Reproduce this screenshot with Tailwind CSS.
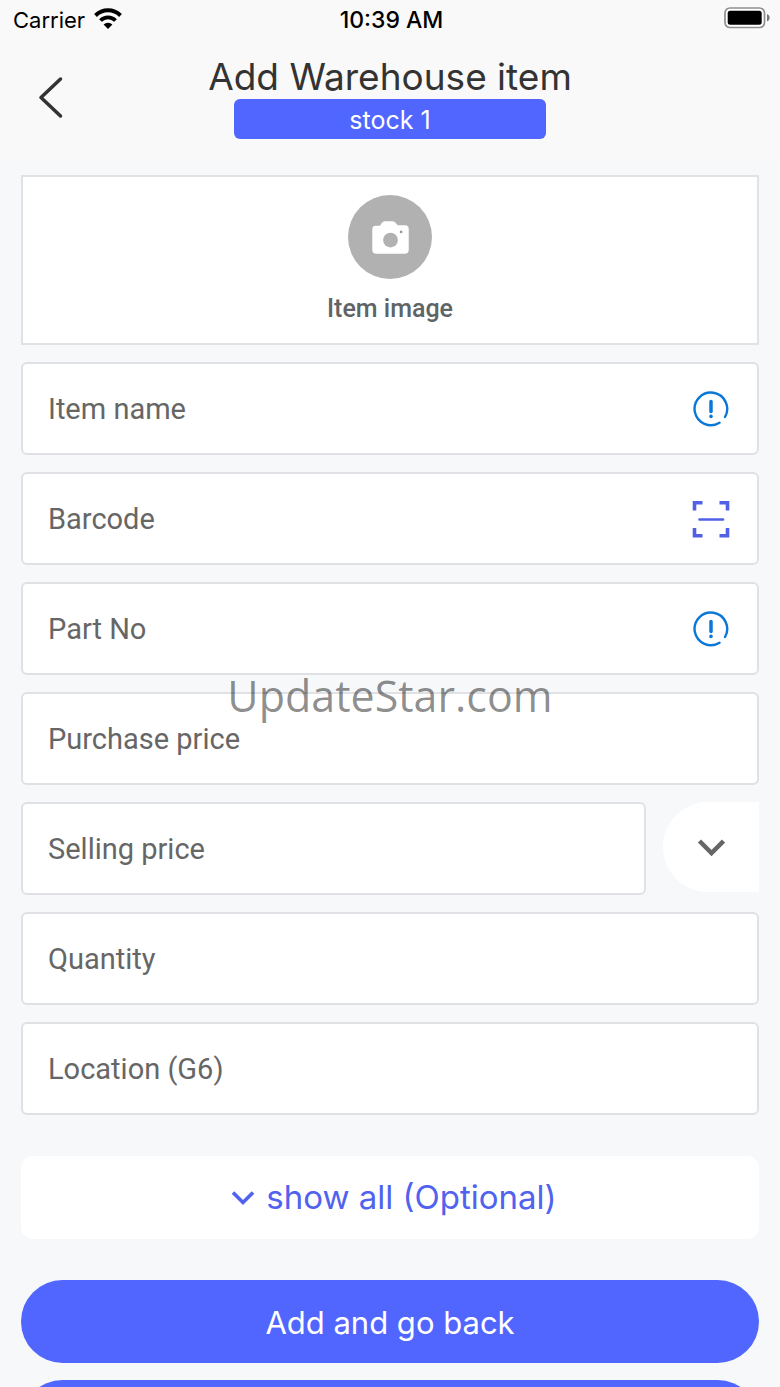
<!DOCTYPE html>
<html lang="en">
<head>
<meta charset="utf-8">
<meta name="viewport" content="width=device-width, initial-scale=1">
<title>Add Warehouse item</title>
<script src="https://cdn.jsdelivr.net/npm/@tailwindcss/browser@4"></script>
</head>
<body class="relative h-screen overflow-hidden bg-[#f6f8fa] font-['Inter',sans-serif] text-[#333333]">
  <header class="h-40 bg-[#f9f9f9]">
    <div class="grid h-10 grid-cols-3 items-center pr-[10px] pl-[13px] text-[22px] leading-10 text-black">
      <div class="flex items-center gap-2">
        <span>Carrier</span>
        <svg class="mb-1 h-[21px] w-[30px]" viewBox="0 0 28 21" aria-hidden="true">
          <path d="M1.500 7.500a17.800 17.800 0 0 1 25 0" fill="none" stroke="#000" stroke-width="4"/>
          <path d="M6.500 12.500a10.700 10.700 0 0 1 15 0" fill="none" stroke="#000" stroke-width="3.800"/>
          <path d="M14 21l-4.400-4.400a6.300 6.300 0 0 1 8.800 0z"/>
        </svg>
      </div>
      <span class="text-center text-[23px] font-medium">10:39 AM</span>
      <svg class="mb-1 h-[22px] w-[46px] justify-self-end" viewBox="0 0 46 22" aria-label="Battery full" role="img">
        <rect x="1" y="1" width="39.500" height="19.500" rx="5" fill="#fff" stroke="#8e8e8e" stroke-width="1.700"/>
        <rect x="3.700" y="3.700" width="34" height="14" rx="2.500"/>
        <path d="M43 7c3.500 1.500 3.500 6 0 7.500z" fill="#777"/>
      </svg>
    </div>
    <div class="grid grid-cols-[72px_1fr_72px] pt-[17px]">
      <button type="button" aria-label="Back" class="flex h-20 items-center justify-end pr-2">
        <svg class="h-11 w-7" viewBox="0 0 28 44" fill="none" stroke="#333" stroke-width="3.500" stroke-linecap="round" stroke-linejoin="round"><path d="M24.500 4L5 22.500L24.500 41"/></svg>
      </button>
      <div class="flex flex-col items-center">
        <h1 class="text-[37px] leading-10 font-normal">Add Warehouse item</h1>
        <div class="mt-0.5 h-10 w-[312px] rounded-md bg-[#5066ff] text-center text-[25px] leading-[42px] text-white">stock 1</div>
      </div>
    </div>
  </header>

  <main class="flex flex-col px-[21px] pt-[15px]">
    <button type="button" class="flex h-[170px] flex-col items-center border-2 border-[#e0e2e5] bg-white pt-[18px] font-['Roboto',sans-serif] text-[25px] font-medium text-[#5f6466]">
      <svg class="size-[84px]" viewBox="0 0 83 83" aria-hidden="true">
        <circle cx="41.500" cy="41.500" r="41.500" fill="#b1b1b1"/>
        <path d="M27 30.500h4.500l2-3q1-1.500 3-1.500h7.500q2 0 3 1.500l2 2.500h7.500q3.500 0 3.500 3.500v20.500q0 4-4 4h-28q-4 0-4-4v-19.500q0-4 3-4z" fill="#fff"/>
        <circle cx="42" cy="44.500" r="7.300" fill="#b1b1b1"/><circle cx="52.500" cy="36.500" r="1.300" fill="#999"/>
      </svg>
      <span class="mt-[14px] leading-8">Item image</span>
    </button>

    <form class="mt-[17px] flex flex-col gap-[17px] font-['Roboto',sans-serif] text-[29px]">
      <div class="flex h-[93px] items-center rounded-md border-2 border-[#dfe1e4] bg-white pr-7 pl-[25px]">
        <input type="text" aria-label="Item name" placeholder="Item name" class="h-full min-w-0 flex-1 bg-transparent outline-none placeholder:text-[#666666]">
        <svg class="size-9" viewBox="0 0 36 36" fill="none" stroke="#0b78d8" stroke-linecap="round" aria-hidden="true">
          <path d="M26.500 31.700A16.300 16.300 0 1 1 32 26" stroke-width="2.400"/><path d="M18 10.500v10" stroke-width="3.500"/><path d="M18 25.400v.1" stroke-width="3.600"/>
        </svg>
      </div>
      <div class="flex h-[93px] items-center rounded-md border-2 border-[#dfe1e4] bg-white pr-[27px] pl-[25px]">
        <input type="text" aria-label="Barcode" placeholder="Barcode" class="h-full min-w-0 flex-1 bg-transparent outline-none placeholder:text-[#666666]">
        <button type="button" aria-label="Scan barcode">
          <svg class="size-[38px]" viewBox="0 0 38 38" fill="none" stroke="#5260e8" aria-hidden="true">
            <path d="M2.500 10.500v-7.800h8M27.500 2.700h8v7.800M35.500 28v7.800h-8M10.500 35.800h-8v-7.800" stroke-width="3.600"/><path d="M7.500 19.500h23.500" stroke-width="2.600" stroke-linecap="round"/>
          </svg>
        </button>
      </div>
      <div class="flex h-[93px] items-center rounded-md border-2 border-[#dfe1e4] bg-white pr-7 pl-[25px]">
        <input type="text" aria-label="Part No" placeholder="Part No" class="h-full min-w-0 flex-1 bg-transparent outline-none placeholder:text-[#666666]">
        <svg class="size-9" viewBox="0 0 36 36" fill="none" stroke="#0b78d8" stroke-linecap="round" aria-hidden="true">
          <path d="M26.500 31.700A16.300 16.300 0 1 1 32 26" stroke-width="2.400"/><path d="M18 10.500v10" stroke-width="3.500"/><path d="M18 25.400v.1" stroke-width="3.600"/>
        </svg>
      </div>
      <input type="text" aria-label="Purchase price" placeholder="Purchase price" class="h-[93px] rounded-md border-2 border-[#dfe1e4] bg-white px-[25px] outline-none placeholder:text-[#666666]">
      <div class="flex gap-[17px]">
        <input type="text" aria-label="Selling price" placeholder="Selling price" class="h-[93px] min-w-0 flex-1 rounded-md border-2 border-[#dfe1e4] bg-white px-[25px] outline-none placeholder:text-[#666666]">
        <button type="button" aria-label="More prices" class="flex h-[90px] w-24 items-center justify-center rounded-l-full bg-white">
          <svg class="h-5 w-7" viewBox="0 0 28 20" fill="none" stroke="#666" stroke-width="4.500"><path d="M2.500 4l12 12L26.500 4"/></svg>
        </button>
      </div>
      <input type="text" aria-label="Quantity" placeholder="Quantity" class="h-[93px] rounded-md border-2 border-[#dfe1e4] bg-white px-[25px] outline-none placeholder:text-[#666666]">
      <input type="text" aria-label="Location (G6)" placeholder="Location (G6)" class="h-[93px] rounded-md border-2 border-[#dfe1e4] bg-white px-[25px] outline-none placeholder:text-[#666666]">
    </form>

    <button type="button" class="mt-[41px] flex h-[83px] items-center justify-center gap-[11px] rounded-xl bg-white pl-2 text-[33px] text-[#5062ee]">
      <svg class="h-4 w-6" viewBox="0 0 24 16" fill="none" stroke="currentColor" stroke-width="3.600"><path d="M2 2.500l10 10 10-10"/></svg>
      show all (Optional)
    </button>
    <button type="button" class="mt-[41px] h-[83px] rounded-full bg-[#5066ff] pt-1 text-[31px] text-white">Add and go back</button>
    <button type="button" aria-label="Add" class="mt-[17px] h-[83px] rounded-full bg-[#5066ff]"></button>
  </main>

  <div class="pointer-events-none absolute inset-x-0 top-[666px] text-center font-['Open_Sans',sans-serif] text-[43px] leading-[60px] text-black/45">UpdateStar.com</div>
</body>
</html>
